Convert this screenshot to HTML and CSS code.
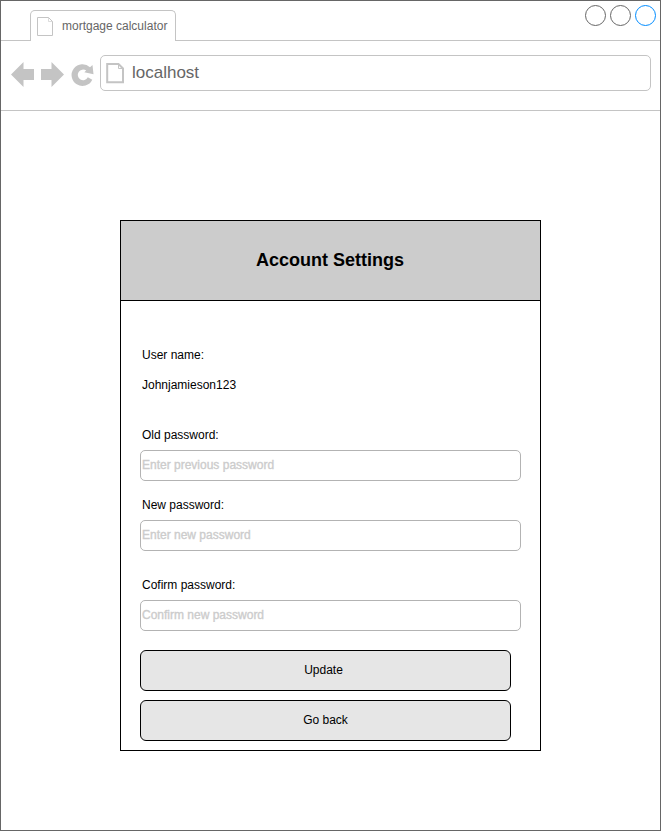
FILE: index.html
```html
<!DOCTYPE html>
<html lang="en">
<head>
<meta charset="utf-8">
<title>mortgage calculator</title>
<link rel="stylesheet" href="styles.css">
</head>
<body>
<div class="window">
  <div class="tabstrip">
    <div class="tab">
      <svg class="tab-icon" width="17" height="20" viewBox="0 0 17 20" fill="none" stroke="#c4c4c4"><path d="M.5 .5H11.500L15.500 4.500V18.500H.5Z"/><path d="M11.500 .5V4.500H15.500" stroke-opacity=".6"/></svg>
      <span>mortgage calculator</span>
    </div>
    <div class="controls">
      <span class="control"></span>
      <span class="control"></span>
      <span class="control control-active"></span>
    </div>
  </div>
  <div class="toolbar">
    <svg class="nav-icons" width="99" height="40" viewBox="1 55 99 40" fill="#c4c4c4">
      <path d="M11 74.500L23.500 62V69H34V80H23.500V87Z"/>
      <path d="M64 74.500L51.500 62V69H41V80H51.500V87Z"/>
      <path d="M90 67.200L92.500 65L93.500 74.300L84.300 72.300L86.200 70.600A5.300 5.300 0 1 0 87.800 77.300L92.300 79.800A10.900 10.900 0 1 1 90 67.200Z"/>
    </svg>
    <div class="address">
      <svg class="page-icon" width="20" height="22" viewBox="0 0 20 22" fill="none" stroke="#c4c4c4" stroke-width="2"><path d="M1.200 1H12.500L17 5.500V19.300H1.200Z"/><path d="M12.500 1V5.500H17" stroke-width="1"/></svg>
      <span>localhost</span>
    </div>
  </div>
  <main class="page">
    <form class="card">
      <h1 class="card-title">Account Settings</h1>
      <div class="card-body">
        <div class="label">User name:</div>
        <div class="label username">Johnjamieson123</div>
        <label class="label" for="old">Old password:</label>
        <input class="field field-old" id="old" type="text" placeholder="Enter previous password">
        <label class="label" for="new">New password:</label>
        <input class="field field-new" id="new" type="text" placeholder="Enter new password">
        <label class="label" for="confirm">Cofirm password:</label>
        <input class="field field-confirm" id="confirm" type="text" placeholder="Confirm new password">
        <button class="button" type="button">Update</button>
        <button class="button button-back" type="button">Go back</button>
      </div>
    </form>
  </main>
</div>
</body>
</html>
```
FILE: styles.css
```css
* { box-sizing: border-box; }
body {
  margin: 0;
  background: #fff;
  color: #000;
  font: 12px/14px "Liberation Sans", Arial, sans-serif;
}
.window {
  width: 661px;
  height: 831px;
  border: 1px solid #666;
}
.tabstrip {
  display: flex;
  justify-content: space-between;
  height: 40px;
  padding: 4px 4px 0 29px;
  border-bottom: 1px solid #c4c4c4;
}
.tab {
  display: flex;
  gap: 8px;
  width: 146px;
  height: 31px;
  margin-top: 5px;
  padding: 6px 0 0 6px;
  border: 1px solid #c4c4c4;
  border-bottom: 0;
  border-radius: 5px 5px 0 0;
  background: #fff;
  color: #666;
  white-space: nowrap;
}
.tab span { margin-top: 2px; }
.controls { display: flex; gap: 4px; }
.control {
  width: 21px;
  height: 21px;
  border: 1px solid #666;
  border-radius: 50%;
}
.control-active { border-color: #008cff; }
.toolbar {
  display: flex;
  height: 70px;
  padding-top: 14px;
  border-bottom: 1px solid #c4c4c4;
}
.address {
  display: flex;
  gap: 6px;
  width: 551px;
  height: 36px;
  padding: 7px 0 0 5px;
  border: 1px solid #c4c4c4;
  border-radius: 5px;
  color: #666;
  font-size: 17px;
  line-height: 20px;
}
.page {
  display: flex;
  justify-content: center;
  padding-top: 109px;
}
.card {
  width: 421px;
  height: 531px;
  border: 1px solid #000;
}
.card-title {
  height: 80px;
  margin: 0;
  padding-right: 1px;
  border-bottom: 1px solid #000;
  background: #ccc;
  font-size: 18px;
  line-height: 78px;
  text-align: center;
}
.card-body {
  display: flex;
  flex-direction: column;
  padding: 47px 19px 0;
}
.label { padding-left: 2px; }
.username { margin: 16px 0 36px; }
.field {
  width: 381px;
  height: 31px;
  margin-top: 8px;
  padding: 0 0 1px 1px;
  border: 1px solid #b3b3b3;
  border-radius: 5px;
  background: #fff;
  font: inherit;
}
.field::placeholder {
  color: #ccc;
  opacity: 1;
  -webkit-text-stroke: .35px #ccc;
}
.field-old { margin-bottom: 17px; }
.field-new { margin-bottom: 27px; }
.field-confirm { margin-bottom: 19px; }
.button {
  width: 371px;
  height: 41px;
  margin-bottom: 9px;
  padding: 0 4px 2px 0;
  border: 1px solid #000;
  border-radius: 6px;
  background: #e6e6e6;
  color: #000;
  font: inherit;
}
.button-back { padding-right: 0; }
```
